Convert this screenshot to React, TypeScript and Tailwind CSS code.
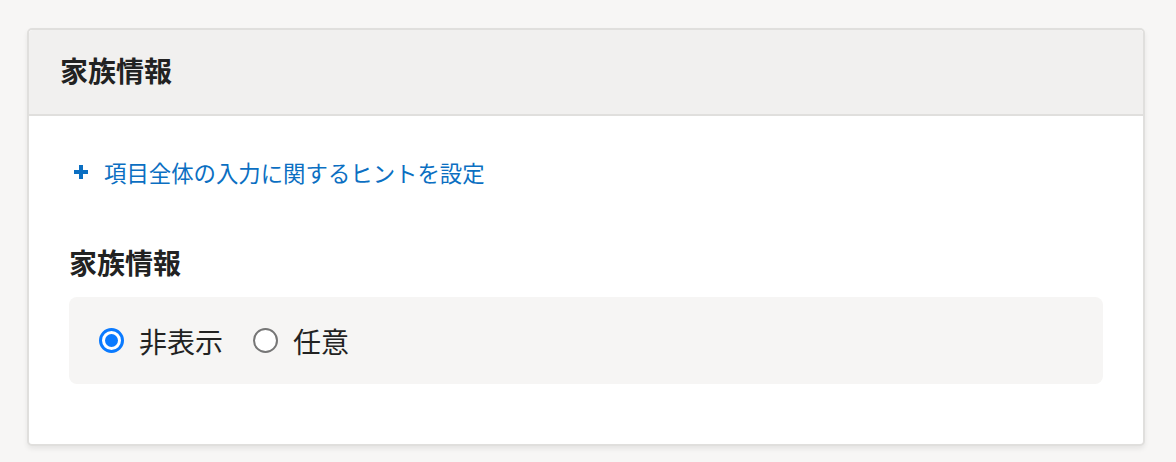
import React, { useState } from "react";

const font = { fontFamily: '"Noto Sans CJK JP", "Noto Sans", sans-serif' };

function Radio({ checked, label, onClick }: { checked: boolean; label: string; onClick: () => void }) {
  return (
    <label className="flex items-center gap-[15px] cursor-pointer" onClick={onClick}>
      {checked ? (
        <span className="w-[25px] h-[25px] rounded-full border-[3px] border-[#0a7aff] bg-white flex items-center justify-center">
          <span className="w-[13px] h-[13px] rounded-full bg-[#0a7aff]" />
        </span>
      ) : (
        <span className="w-[25px] h-[25px] rounded-full border-2 border-[#767676] bg-white" />
      )}
      <span className="text-[28px] leading-[36px] text-[#222]">{label}</span>
    </label>
  );
}

export default function App() {
  const [value, setValue] = useState("hidden");

  return (
    <div className="w-[1176px] h-[462px] bg-[#f7f6f5] pt-[28px] overflow-hidden" style={font}>
      <div className="ml-[27px] w-[1118px] bg-white border-2 border-[#e0dfdd] rounded-[5px] shadow-[0_3px_5px_rgba(0,0,0,0.07)]">
        {/* header */}
        <div className="h-[86px] bg-[#f1f0ef] border-b-2 border-[#e0dfdd] rounded-t-[4px] flex items-center px-[31px] pb-[5px]">
          <h2 className="text-[28px] leading-[36px] font-bold text-[#222]">家族情報</h2>
        </div>

        {/* body */}
        <div className="px-[40px] pt-[40px] pb-[60px]">
          <button className="flex items-center gap-[16px] ml-[5px] h-[32px] text-[#0b6fc2]">
            <svg width="14" height="14" viewBox="0 0 14 14">
              <rect x="5" y="0" width="4" height="14" fill="currentColor" />
              <rect x="0" y="5" width="14" height="4" fill="currentColor" />
            </svg>
            <span className="text-[22.4px] leading-[32px]">項目全体の入力に関するヒントを設定</span>
          </button>

          <div className="mt-[56px] text-[28px] leading-[36px] font-bold text-[#222]">家族情報</div>

          <div className="mt-[17px] h-[87px] bg-[#f6f5f4] rounded-[8px] flex items-center pl-[30px] gap-[30px]">
            <Radio checked={value === "hidden"} label="非表示" onClick={() => setValue("hidden")} />
            <Radio checked={value === "optional"} label="任意" onClick={() => setValue("optional")} />
          </div>
        </div>
      </div>
    </div>
  );
}
